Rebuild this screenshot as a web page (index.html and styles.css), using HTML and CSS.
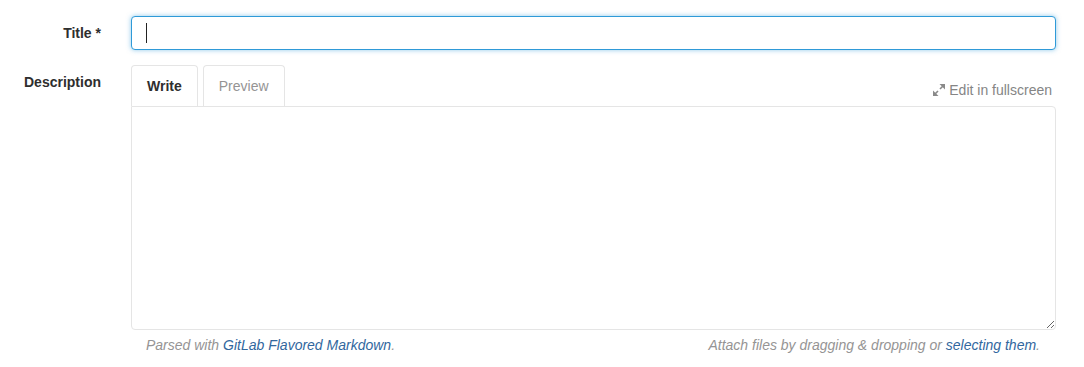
FILE: index.html
```html
<!DOCTYPE html>
<html lang="en">

<head>
    <meta charset="UTF-8">
    <meta name="viewport" content="width=device-width, initial-scale=1.0">
    <title>New Issue</title>
    <link rel="stylesheet" href="styles.css">
</head>

<body>

    <form class="issue-form">
        <div class="form-row">
            <label class="form-label" for="issue-title">Title *</label>
            <div class="input-wrap">
                <input class="form-control" id="issue-title" type="text">
                <span class="caret"></span>
            </div>
        </div>

        <div class="form-row">
            <label class="form-label" for="issue-description">Description</label>
            <div class="md-area">
                <div class="md-header">
                    <ul class="tabs">
                        <li class="tab active">Write</li>
                        <li class="tab">Preview</li>
                    </ul>
                    <a class="fullscreen-link" href="#">
                        <svg class="expand-icon" width="12" height="12" viewBox="0 0 12 12">
                            <polygon points="6.5,0 12,0 12,5.5" fill="#8a8a8a" />
                            <line x1="10.5" y1="1.5" x2="7" y2="5" stroke="#8a8a8a" stroke-width="1.6" />
                            <polygon points="0,6.5 0,12 5.5,12" fill="#8a8a8a" />
                            <line x1="1.5" y1="10.5" x2="5" y2="7" stroke="#8a8a8a" stroke-width="1.6" />
                        </svg>
                        Edit in fullscreen
                    </a>
                </div>
                <textarea class="md-textarea" id="issue-description"></textarea>
                <div class="md-footer">
                    <span>Parsed with <a href="#">GitLab Flavored Markdown</a>.</span>
                    <span>Attach files by dragging &amp; dropping or <a href="#">selecting them</a>.</span>
                </div>
            </div>
        </div>
    </form>

</body>

</html>
```

FILE: styles.css
```css
body {
    font-family: "Liberation Sans", Arial, sans-serif;
    margin: 0;
    color: #2e2e2e;
    background-color: white;
}

.issue-form {
    padding: 16px 28px 0 0;
}

.form-row {
    display: grid;
    grid-template-columns: 101px 1fr;
    column-gap: 30px;
    margin-bottom: 15px;
}

.form-label {
    text-align: right;
    font-weight: bold;
    font-size: 14px;
    line-height: 20px;
    padding-top: 7px;
}

.input-wrap {
    position: relative;
}

.form-control {
    display: block;
    box-sizing: border-box;
    width: 100%;
    height: 34px;
    padding: 6px 14px;
    border: 1px solid #2f9ad8;
    border-radius: 4px;
    box-shadow: 0 0 5px rgba(47, 154, 216, 0.55);
    font-family: inherit;
    font-size: 14px;
    outline: none;
}

/* fake text cursor, the screenshot has one */
.caret {
    position: absolute;
    left: 15px;
    top: 7px;
    width: 1px;
    height: 20px;
    background-color: #222;
}

.md-header {
    display: flex;
    justify-content: space-between;
    align-items: flex-end;
}

.tabs {
    display: flex;
    gap: 5px;
    list-style: none;
    margin: 0;
    padding: 0;
}

.tab {
    height: 40px;
    line-height: 40px;
    padding: 0 15px;
    border: 1px solid #e5e5e5;
    border-bottom: none;
    border-radius: 4px 4px 0 0;
    font-size: 14px;
    color: #959494;
}

.tab.active {
    font-weight: bold;
    color: #2e2e2e;
}

.fullscreen-link {
    display: flex;
    align-items: center;
    gap: 4px;
    padding: 0 4px 8px 0;
    font-size: 14px;
    color: #858585;
    text-decoration: none;
}

.md-textarea {
    display: block;
    box-sizing: border-box;
    width: 100%;
    height: 224px;
    border: 1px solid #e5e5e5;
    border-radius: 0 4px 4px 4px;
    resize: vertical;
    font-family: inherit;
    font-size: 14px;
    outline: none;
}

.md-footer {
    display: flex;
    justify-content: space-between;
    padding: 6px 16px 0 15px;
    font-size: 14px;
    line-height: 18px;
    font-style: italic;
    color: #959494;
}

.md-footer a {
    color: #31679e;
    text-decoration: none;
}
```
